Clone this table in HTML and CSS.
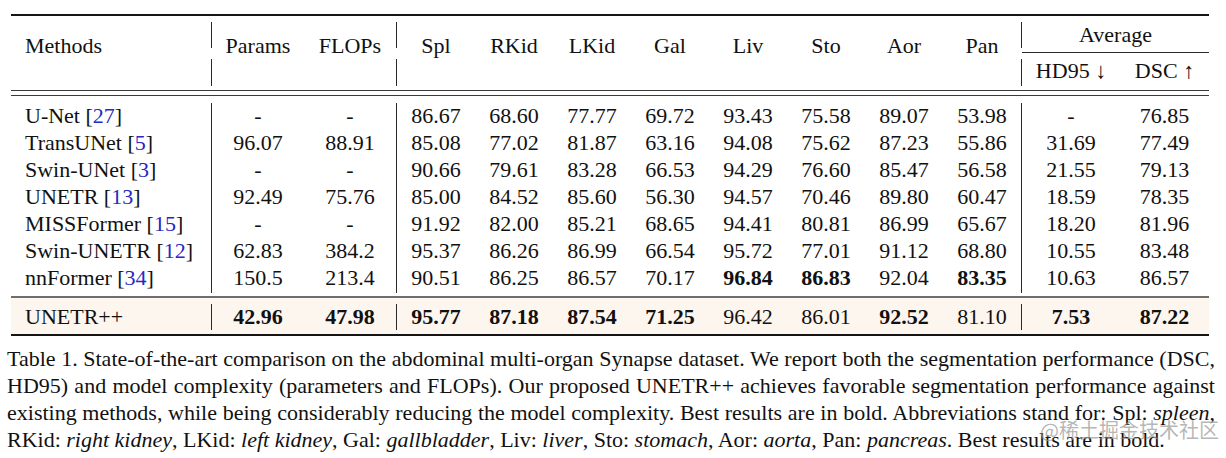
FILE: index.html
```html
<!DOCTYPE html>
<html lang="en">
<head>
<meta charset="utf-8">
<title>Table 1</title>
<link rel="stylesheet" href="styles.css">
</head>
<body>
<div class="page">
  <div class="tbl">
    <div class="grid head">
      <div class="vs c2 r1"></div><div class="vs c2 r3"></div>
      <div class="vs c5 r1"></div><div class="vs c5 r3"></div>
      <div class="vs c14 r1"></div><div class="vs c14 r3"></div>
      <div class="avg">Average</div>
      <div class="cmid"></div>
      <div class="hd95">HD95 ↓</div>
      <div class="dsc">DSC ↑</div>
      <div class="hc left">Methods</div>
      <div class="hc">Params</div>
      <div class="hc">FLOPs</div>
      <div class="hc">Spl</div>
      <div class="hc">RKid</div>
      <div class="hc">LKid</div>
      <div class="hc">Gal</div>
      <div class="hc">Liv</div>
      <div class="hc">Sto</div>
      <div class="hc">Aor</div>
      <div class="hc">Pan</div>
    </div>

    <div class="grid body">
      <div class="vs c2 all"></div>
      <div class="vs c5 all"></div>
      <div class="vs c14 all"></div>

      <div class="m">U-Net [<span class="cite">27</span>]</div>
      <div>-</div><div>-</div>
      <div>86.67</div><div>68.60</div><div>77.77</div><div>69.72</div><div>93.43</div><div>75.58</div><div>89.07</div><div>53.98</div>
      <div>-</div><div>76.85</div>

      <div class="m">TransUNet [<span class="cite">5</span>]</div>
      <div>96.07</div><div>88.91</div>
      <div>85.08</div><div>77.02</div><div>81.87</div><div>63.16</div><div>94.08</div><div>75.62</div><div>87.23</div><div>55.86</div>
      <div>31.69</div><div>77.49</div>

      <div class="m">Swin-UNet [<span class="cite">3</span>]</div>
      <div>-</div><div>-</div>
      <div>90.66</div><div>79.61</div><div>83.28</div><div>66.53</div><div>94.29</div><div>76.60</div><div>85.47</div><div>56.58</div>
      <div>21.55</div><div>79.13</div>

      <div class="m">UNETR [<span class="cite">13</span>]</div>
      <div>92.49</div><div>75.76</div>
      <div>85.00</div><div>84.52</div><div>85.60</div><div>56.30</div><div>94.57</div><div>70.46</div><div>89.80</div><div>60.47</div>
      <div>18.59</div><div>78.35</div>

      <div class="m">MISSFormer [<span class="cite">15</span>]</div>
      <div>-</div><div>-</div>
      <div>91.92</div><div>82.00</div><div>85.21</div><div>68.65</div><div>94.41</div><div>80.81</div><div>86.99</div><div>65.67</div>
      <div>18.20</div><div>81.96</div>

      <div class="m">Swin-UNETR [<span class="cite">12</span>]</div>
      <div>62.83</div><div>384.2</div>
      <div>95.37</div><div>86.26</div><div>86.99</div><div>66.54</div><div>95.72</div><div>77.01</div><div>91.12</div><div>68.80</div>
      <div>10.55</div><div>83.48</div>

      <div class="m">nnFormer [<span class="cite">34</span>]</div>
      <div>150.5</div><div>213.4</div>
      <div>90.51</div><div>86.25</div><div>86.57</div><div>70.17</div><div class="b">96.84</div><div class="b">86.83</div><div>92.04</div><div class="b">83.35</div>
      <div>10.63</div><div>86.57</div>
    </div>

    <div class="grid final">
      <div class="vs c2 one"></div>
      <div class="vs c5 one"></div>
      <div class="vs c14 one"></div>
      <div class="m">UNETR++</div>
      <div class="b">42.96</div><div class="b">47.98</div>
      <div class="b">95.77</div><div class="b">87.18</div><div class="b">87.54</div><div class="b">71.25</div><div>96.42</div><div>86.01</div><div class="b">92.52</div><div>81.10</div>
      <div class="b">7.53</div><div class="b">87.22</div>
    </div>
  </div>

  <div class="caption">
    <div class="cl">Table 1. State-of-the-art comparison on the abdominal multi-organ Synapse dataset. We report both the segmentation performance (DSC,</div>
    <div class="cl">HD95) and model complexity (parameters and FLOPs). Our proposed UNETR++ achieves favorable segmentation performance against</div>
    <div class="cl">existing methods, while being considerably reducing the model complexity. Best results are in bold. Abbreviations stand for: Spl: <i>spleen</i>,</div>
    <div class="cl last">RKid: <i>right kidney</i>, LKid: <i>left kidney</i>, Gal: <i>gallbladder</i>, Liv: <i>liver</i>, Sto: <i>stomach</i>, Aor: <i>aorta</i>, Pan: <i>pancreas</i>. Best results are in bold.</div>
    <div class="watermark">@稀土掘金技术社区</div>
  </div>
</div>
</body>
</html>
```

FILE: styles.css
```css
html, body {
  margin: 0;
  padding: 0;
  background: #ffffff;
}

body {
  font-family: "Liberation Serif", "Times New Roman", serif;
  color: #111111;
  font-size: 22px;
}

.page {
  padding-left: 7px;
  padding-top: 14px;
}

.tbl {
  margin-left: 4px;
  width: 1198px;
}

.grid {
  display: grid;
  grid-template-columns: 200px 1px 92px 92px 1px repeat(8, 78px) 1px 98px 89px;
  line-height: 27px;
  text-align: center;
}

/* vertical separators */
.vs {
  background: #2a2a2a;
  width: 1px;
}
.c2 { grid-column: 2; }
.c5 { grid-column: 5; }
.c14 { grid-column: 14; }

/* header */
.head {
  grid-template-rows: 36px 1px 37px;
  border-top: 2px solid #151515;
  border-bottom: 1px solid #3a3a3a;
}
.head .r1 { grid-row: 1; margin: 6px 0 4px; }
.head .r3 { grid-row: 3; margin: 6px 0 4px; }

.hc {
  grid-row: 1 / 4;
  align-self: start;
  padding-top: 16px;
}
.left {
  text-align: left;
  padding-left: 14px;
}

.avg {
  grid-row: 1;
  grid-column: 15 / 17;
  padding-top: 5px;
}
.cmid {
  grid-row: 2;
  grid-column: 15 / 17;
  background: #2a2a2a;
}
.hd95 {
  grid-row: 3;
  grid-column: 15;
  padding-top: 4px;
}
.dsc {
  grid-row: 3;
  grid-column: 16;
  padding-top: 4px;
}

/* body */
.body {
  margin-top: 4px;
  border-top: 1px solid #3a3a3a;
  padding: 6px 0 5px;
  grid-template-rows: repeat(7, 27px);
}
.body .all {
  grid-row: 1 / 8;
  margin: 1px 0 -2px;
}

.m {
  text-align: left;
  padding-left: 14px;
}
.cite {
  color: #2727c4;
}
.b {
  font-weight: bold;
}

/* final row */
.final {
  grid-template-rows: 36px;
  background: #fdf6ef;
  border-top: 2px solid #6e6e6e;
  border-bottom: 2px solid #151515;
  align-items: center;
}
.final .one {
  grid-row: 1;
  margin: 6px 0 4px;
  align-self: stretch;
}

/* caption */
.caption {
  position: relative;
  width: 1208px;
  margin-top: 9px;
  line-height: 27px;
  font-size: 22px;
}
.cl {
  text-align: justify;
  text-align-last: justify;
}
.cl.last {
  text-align-last: left;
}

.watermark {
  position: absolute;
  right: -4px;
  bottom: 12px;
  font-family: "Noto Sans CJK SC", "Noto Sans", sans-serif;
  font-size: 20px;
  line-height: 22px;
  color: rgba(150, 150, 150, 0.7);
  white-space: nowrap;
}
```
